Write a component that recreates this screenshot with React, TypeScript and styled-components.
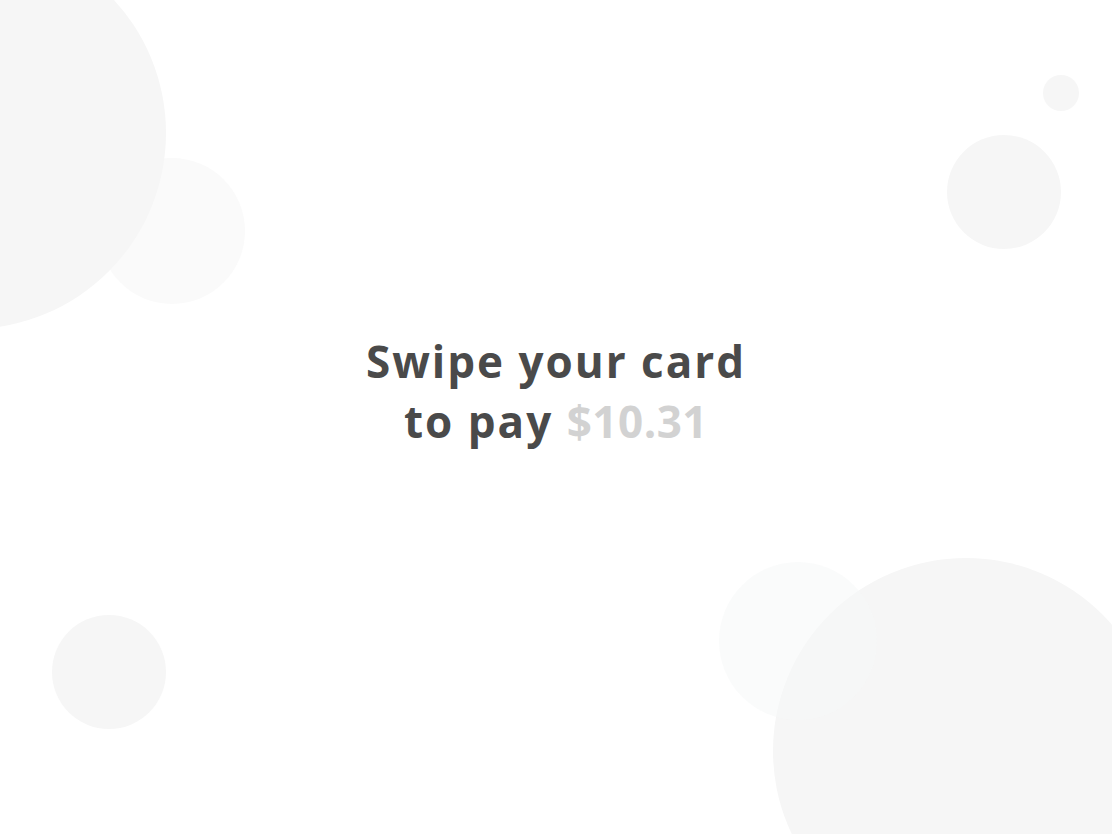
import styled, { createGlobalStyle } from "styled-components";

const Global = createGlobalStyle`
  html, body {
    margin: 0;
    padding: 0;
    background: #ffffff;
  }
`;

const Screen = styled.div`
  position: relative;
  width: 1112px;
  height: 834px;
  overflow: hidden;
  background: #ffffff;
  display: flex;
  align-items: center;
  justify-content: center;
`;

// 배경 원. 위치가 곧 내용이라 absolute 사용.
const Bubble = styled.div<{ x: number; y: number; r: number; color: string }>`
  position: absolute;
  left: ${(p) => p.x - p.r}px;
  top: ${(p) => p.y - p.r}px;
  width: ${(p) => p.r * 2}px;
  height: ${(p) => p.r * 2}px;
  border-radius: 50%;
  background: ${(p) => p.color};
`;

const Message = styled.h1`
  position: relative;
  margin: 0 0 52px 0;
  font-family: "Open Sans", "Liberation Sans", sans-serif;
  font-weight: 700;
  font-size: 44px;
  line-height: 60px;
  letter-spacing: 2px;
  color: #4a4a4a;
  text-align: center;
`;

// 금액은 회색, 자간 조금 좁게.
const Amount = styled.span`
  color: #d2d2d2;
  letter-spacing: 0.5px;
`;

function App() {
  return (
    <>
      <Global />
      <Screen>
        <Bubble x={172} y={231} r={73} color="#fafafa" />
        <Bubble x={-30} y={133} r={196} color="#f6f6f6" />
        <Bubble x={1061} y={93} r={18} color="#f6f6f6" />
        <Bubble x={1004} y={192} r={57} color="#f6f6f6" />
        <Bubble x={109} y={672} r={57} color="#f6f6f6" />
        <Bubble x={966} y={751} r={193} color="#f6f6f6" />
        <Bubble x={798} y={641} r={79} color="rgba(245, 248, 248, 0.55)" />
        <Message>
          Swipe your card
          <br />
          to pay <Amount>$10.31</Amount>
        </Message>
      </Screen>
    </>
  );
}

export default App;
